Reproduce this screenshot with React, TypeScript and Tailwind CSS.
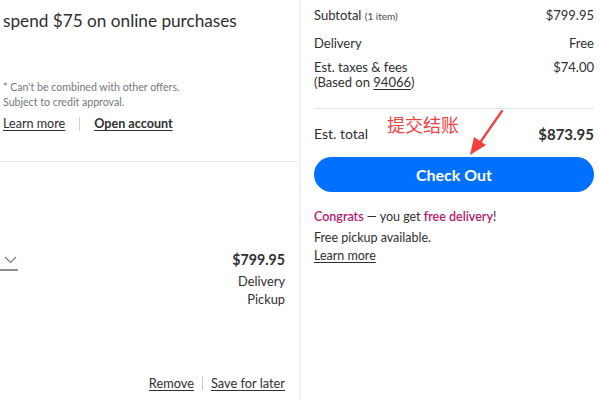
import React from "react";

export default function App() {
  return (
    <div
      className="relative w-[600px] h-[400px] overflow-hidden bg-white flex text-[#2e2f32]"
      style={{ fontFamily: "Lato, 'Noto Sans', sans-serif" }}
    >
      {/* Left column */}
      <div className="w-[301px] shrink-0 flex flex-col border-r-[2px] border-[#f1f1f1]">
        <div className="h-[162px] shrink-0 border-b border-[#e6e6e6] pl-[3px] pt-[9px]">
          <div className="text-[17.2px] leading-[24px]">spend $75 on online purchases</div>
          <div className="mt-[47px] text-[10.6px] leading-[15px] text-[#74767c]">
            <div>* Can't be combined with other offers.</div>
            <div>Subject to credit approval.</div>
          </div>
          <div className="mt-[5px] flex items-center text-[12.6px] leading-[18px]">
            <span className="underline underline-offset-2">Learn more</span>
            <span className="mx-[14px] h-[14px] w-px bg-[#d0d0d0]" />
            <span className="font-bold underline underline-offset-2">Open account</span>
          </div>
        </div>
        <div className="flex-1 flex flex-col pr-[14px] pb-[8px]">
          <div className="mt-[89px] flex justify-between items-start">
            <div className="w-[18px] h-[20px] border-b-2 border-[#8f9095] flex items-center justify-end pr-px">
              <svg width="13" height="8" viewBox="0 0 13 8" fill="none">
                <path d="M1 1l5.5 5.5L12 1" stroke="#7d7e83" strokeWidth="1.2" />
              </svg>
            </div>
            <div className="flex flex-col items-end text-[12.8px] leading-[18px]">
              <div className="text-[14.2px] font-bold">$799.95</div>
              <div className="mt-[3px]">Delivery</div>
              <div>Pickup</div>
            </div>
          </div>
          <div className="mt-auto flex justify-end items-center text-[12.8px] leading-[18px]">
            <span className="underline underline-offset-2">Remove</span>
            <span className="mx-[8px] h-[14px] w-px bg-[#c8c8c8]" />
            <span className="underline underline-offset-2">Save for later</span>
          </div>
        </div>
      </div>

      {/* Right column */}
      <div className="flex-1 pl-[13px] pr-[6px] pt-[6px] text-[13px] leading-[18px]">
        <div className="flex justify-between">
          <div>
            Subtotal <span className="text-[10px] text-[#46474a]">(1 item)</span>
          </div>
          <div>$799.95</div>
        </div>
        <div className="mt-[9px] flex justify-between">
          <div>Delivery</div>
          <div>Free</div>
        </div>
        <div className="mt-[8px] flex justify-between leading-[15px]">
          <div>
            <div>Est. taxes &amp; fees</div>
            <div>
              (Based on <span className="underline underline-offset-2">94066</span>)
            </div>
          </div>
          <div>$74.00</div>
        </div>
        <div className="mt-[18px] h-px bg-[#e3e4e5]" />
        <div className="mt-[16px] flex justify-between items-center">
          <div className="text-[14px]">Est. total</div>
          <div className="text-[15px] font-bold">$873.95</div>
        </div>
        <button className="mt-[14px] w-full h-[35px] rounded-full bg-[#0071ff] text-white text-[16px] font-bold flex items-center justify-center">
          Check Out
        </button>
        <div className="mt-[16px] text-[12.5px] leading-[18px]">
          <span className="text-[#b8186f] font-semibold">Congrats</span> — you get{" "}
          <span className="text-[#b8186f] font-semibold">free delivery</span>!
        </div>
        <div className="mt-[3px] text-[12.5px] leading-[18px]">Free pickup available.</div>
        <div className="text-[12.5px] leading-[18px] underline underline-offset-2">Learn more</div>
      </div>

      {/* Annotation overlay */}
      <div
        className="absolute left-[387px] top-[113px] text-[18px] leading-[22px] text-[#f23f3f]"
        style={{ fontFamily: "'Noto Sans CJK SC', sans-serif" }}
      >
        提交结账
      </div>
      <svg className="absolute left-[465px] top-[108px]" width="42" height="52" viewBox="0 0 42 52">
        <path d="M37 3 L14 36" stroke="#f23f3f" strokeWidth="2.2" strokeLinecap="round" />
        <path d="M5 47 L9 29 L21 37 Z" fill="#f23f3f" />
      </svg>
    </div>
  );
}
